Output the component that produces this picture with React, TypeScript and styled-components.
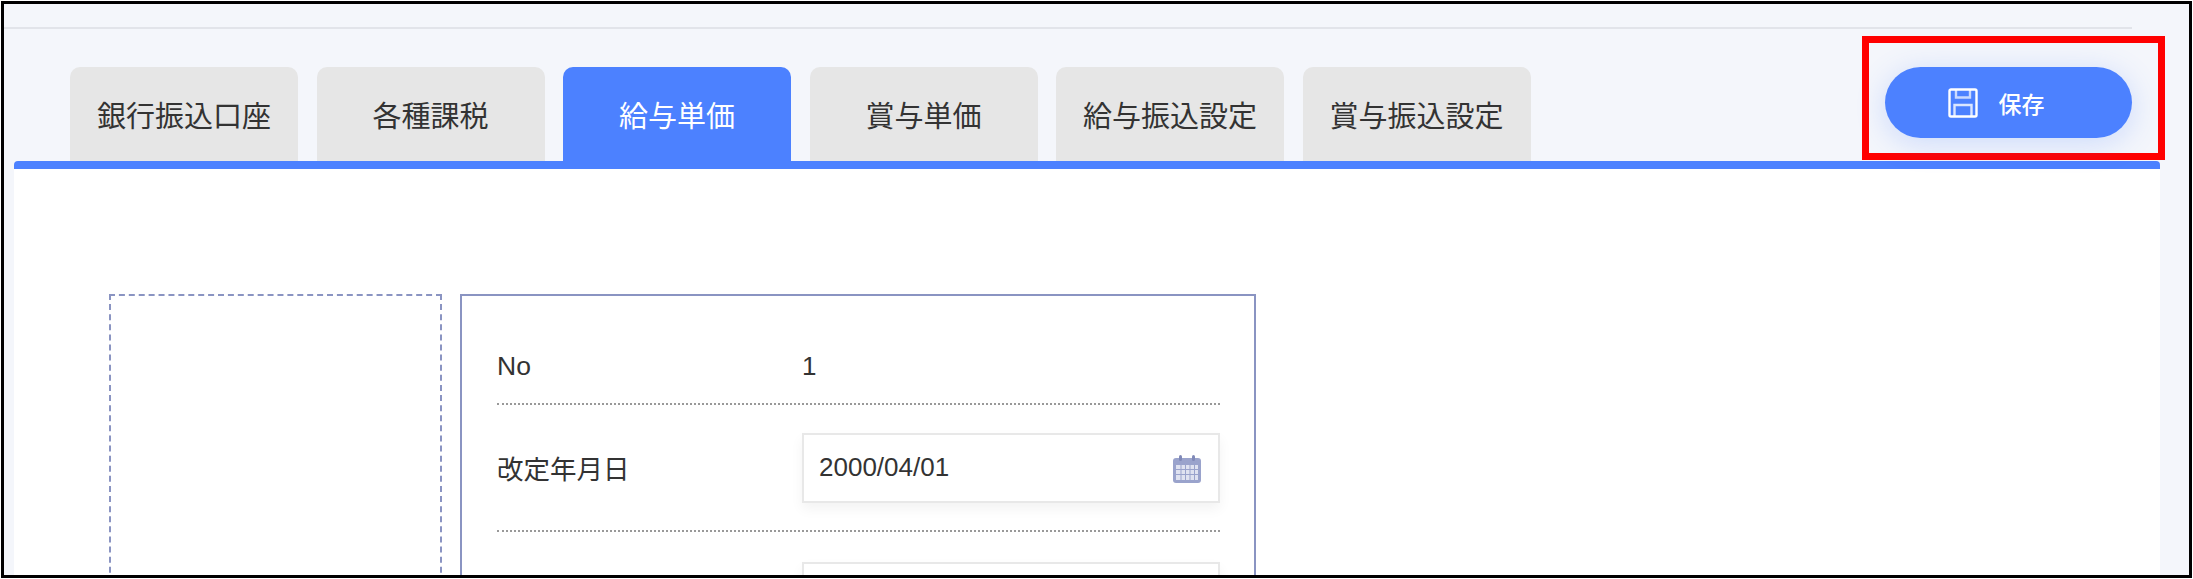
import React from 'react'
import styled, { createGlobalStyle } from 'styled-components'

const tabs = ['銀行振込口座', '各種課税', '給与単価', '賞与単価', '給与振込設定', '賞与振込設定']
const ACTIVE_TAB = '給与単価'

const App: React.FC = () => {
  return (
    <>
      <GlobalStyle />
      <Frame>
        <TopRule />
        <TabHeader>
          <TabList>
            {tabs.map((tab) => (
              <Tab key={tab} $active={tab === ACTIVE_TAB}>
                {tab}
              </Tab>
            ))}
          </TabList>
          <SaveHighlight>
            <SaveButton type="button">
              <SaveIcon />
              <span>保存</span>
            </SaveButton>
          </SaveHighlight>
        </TabHeader>
        <Panel>
          <PhotoSlot />
          <Card>
            <Row $height={109} $pushDown={34}>
              <Label>No</Label>
              <Value>1</Value>
            </Row>
            <Row $height={127}>
              <Label>改定年月日</Label>
              <DateField>
                2000/04/01
                <CalendarIcon />
              </DateField>
            </Row>
            <Row $height={131}>
              <Label />
              <DateField />
            </Row>
          </Card>
        </Panel>
      </Frame>
    </>
  )
}

const SaveIcon: React.FC = () => (
  <svg width="30" height="30" viewBox="0 0 30 30" fill="none" stroke="#fff" strokeWidth="2.4">
    <path d="M3 1.500h24a1.500 1.500 0 0 1 1.500 1.500v24a1.500 1.500 0 0 1-1.500 1.500H3A1.500 1.500 0 0 1 1.500 27V3A1.500 1.500 0 0 1 3 1.500z" />
    <path d="M8 2v7.500h14V2" opacity="0.7" />
    <path d="M6.500 28V17h17v11" opacity="0.8" />
  </svg>
)

const CalendarIcon: React.FC = () => (
  <CalendarSvg width="28" height="28" viewBox="0 0 28 28">
    <rect x="0" y="3" width="28" height="25" rx="3" fill="#9aa3cc" />
    <rect x="6" y="0" width="3" height="6" rx="1.500" fill="#8089b8" />
    <rect x="19" y="0" width="3" height="6" rx="1.500" fill="#8089b8" />
    <rect x="3" y="10" width="22" height="15" fill="#dfe2f0" />
    <path d="M3 14.500h22M3 19.500h22M8 10v15M12.500 10v15M17 10v15M21.500 10v15" stroke="#9aa3cc" strokeWidth="1" />
  </CalendarSvg>
)

const GlobalStyle = createGlobalStyle`
  html, body {
    margin: 0;
    padding: 0;
    background: #fff;
  }
  body {
    font-family: "Liberation Sans", "Noto Sans CJK JP", sans-serif;
    color: #333;
  }
`

const Frame = styled.div`
  box-sizing: border-box;
  width: 2191px;
  height: 577px;
  margin: 1px 0 0 1px;
  border: 3px solid #000;
  background: #f4f6fb;
  overflow: hidden;
`

const TopRule = styled.div`
  width: 2128px;
  height: 2px;
  margin-top: 23px;
  background: #e2e4ea;
`

const TabHeader = styled.div`
  position: relative;
  z-index: 1;
  display: flex;
  justify-content: space-between;
  height: 132px;
  margin-right: 24px;
  padding-left: 66px;
`

const TabList = styled.div`
  display: flex;
  align-items: flex-end;
  gap: 18.500px;
`

const Tab = styled.div<{ $active?: boolean }>`
  display: flex;
  align-items: center;
  justify-content: center;
  width: 228px;
  height: 94px;
  border-radius: 10px 10px 0 0;
  font-size: 29px;
  background: ${(p) => (p.$active ? '#4c81ff' : '#e6e6e6')};
  color: ${(p) => (p.$active ? '#fff' : '#333')};
`

const SaveHighlight = styled.div`
  box-sizing: border-box;
  display: flex;
  align-items: flex-start;
  width: 303px;
  height: 124px;
  margin-top: 7px;
  padding: 24px 0 0 16px;
  border: 7px solid #f00;
`

const SaveButton = styled.button`
  display: flex;
  align-items: center;
  justify-content: center;
  gap: 21px;
  width: 247px;
  height: 71px;
  padding: 0 25px 0 0;
  border: none;
  border-radius: 36px;
  background: #4c81ff;
  box-shadow: 0 5px 30px rgba(76, 129, 255, 0.24);
  color: #fff;
  font-family: inherit;
  font-size: 23px;
  font-weight: 500;
`

const Panel = styled.div`
  display: flex;
  align-items: flex-start;
  gap: 18px;
  width: 2146px;
  height: 420px;
  margin-left: 10px;
  padding: 125px 0 0 95px;
  box-sizing: border-box;
  border-top: 8px solid #4c81ff;
  border-radius: 4px 4px 0 0;
  background: #fff;
`

const PhotoSlot = styled.div`
  box-sizing: border-box;
  width: 333px;
  height: 400px;
  flex-shrink: 0;
  border: 2px dashed #8a94c2;
`

const Card = styled.div`
  box-sizing: border-box;
  width: 796px;
  height: 400px;
  flex-shrink: 0;
  padding: 0 34px 0 35px;
  border: 2px solid #8a94c2;
`

const Row = styled.div<{ $height: number; $pushDown?: number }>`
  display: flex;
  align-items: center;
  height: ${(p) => p.$height}px;
  padding-top: ${(p) => p.$pushDown ?? 0}px;
  border-bottom: 2px dotted #999;
  box-sizing: border-box;
`

const Label = styled.div`
  width: 305px;
  flex-shrink: 0;
  font-size: 26.500px;
`

const Value = styled.div`
  font-size: 26px;
`

const DateField = styled.div`
  box-sizing: border-box;
  display: flex;
  align-items: center;
  justify-content: space-between;
  width: 418px;
  height: 70px;
  padding: 0 17px 0 15px;
  border: 2px solid #e8e8e8;
  background: #fff;
  box-shadow: 0 6px 12px rgba(0, 0, 0, 0.05);
  font-size: 26px;
`

const CalendarSvg = styled.svg`
  flex-shrink: 0;
  margin-top: 2px;
`

export default App
